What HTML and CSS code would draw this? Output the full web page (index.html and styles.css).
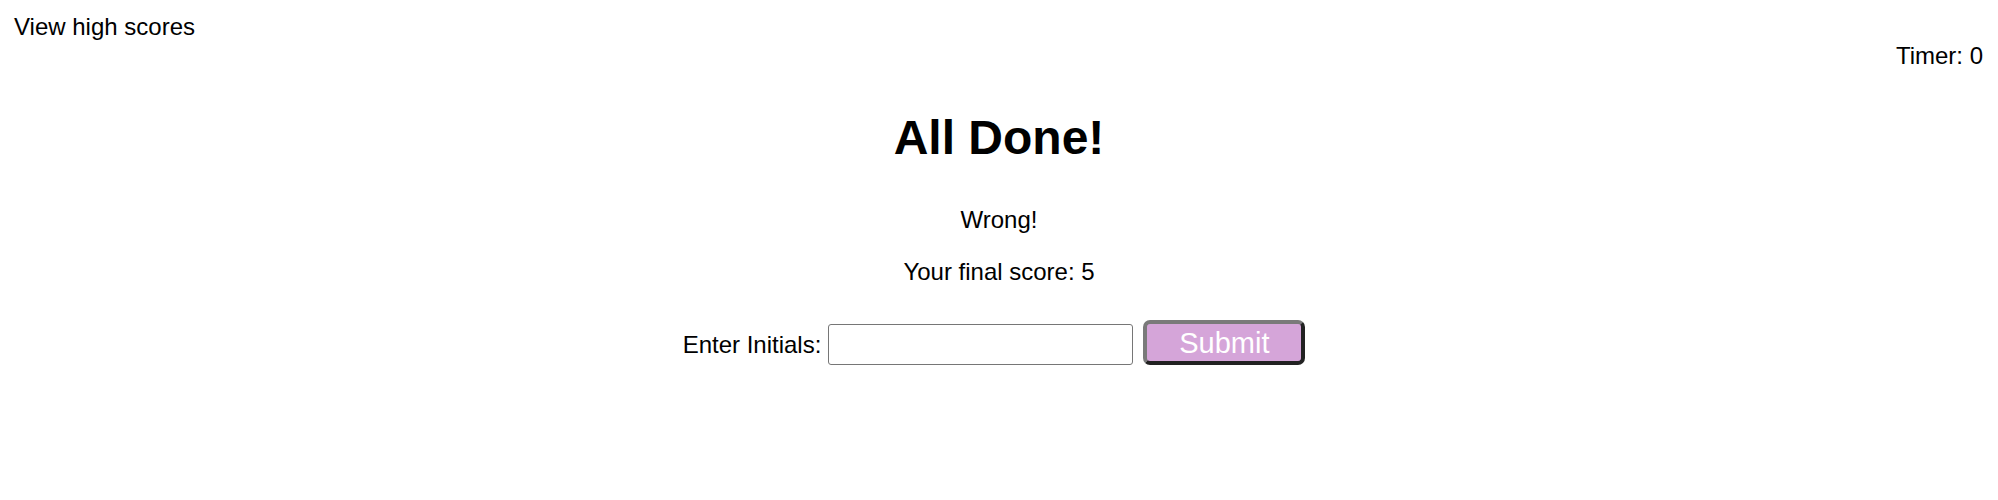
FILE: index.html
```html
<!DOCTYPE html>
<html lang="en">
<head>
<meta charset="utf-8">
<title>Quiz - All Done</title>
<link rel="stylesheet" href="styles.css">
</head>
<body>
<header class="top">
  <a class="scores-link">View high scores</a>
  <div class="timer">Timer: 0</div>
</header>
<main class="done">
  <h1 class="title">All Done!</h1>
  <p class="feedback">Wrong!</p>
  <p class="score">Your final score: 5</p>
  <form class="initials-form">
    <label class="initials-label" for="initials">Enter Initials:</label>
    <input class="initials-input" id="initials" type="text">
    <button class="submit-btn" type="button">Submit</button>
  </form>
</main>
</body>
</html>
```
FILE: styles.css
```css
html, body {
  margin: 0;
  padding: 0;
  background: #ffffff;
}
body {
  font-family: "Liberation Sans", Arial, Helvetica, sans-serif;
  font-size: 24px;
  line-height: 28px;
  color: #000000;
}
.top {
  padding: 13px 15px 0 14px;
}
.scores-link {
  display: block;
  color: #000000;
  text-decoration: none;
}
.timer {
  margin-top: 1px;
  text-align: right;
}
.done {
  text-align: center;
}
.title {
  margin: 40px 0 0;
  font-size: 48px;
  line-height: 56px;
  font-weight: bold;
}
.feedback {
  margin: 40px 0 0;
}
.score {
  margin: 24px 0 0;
}
.initials-form {
  margin: 34px 0 0;
  display: flex;
  justify-content: center;
  align-items: flex-end;
  padding-right: 10px;
}
.initials-label {
  margin-bottom: 6px;
  margin-right: 7px;
}
.initials-input {
  box-sizing: border-box;
  width: 305px;
  height: 41px;
  margin: 0 10px 0 0;
  padding: 0 6px;
  border: 1px solid #767676;
  border-radius: 3px;
  font-family: "Liberation Sans", Arial, sans-serif;
  font-size: 24px;
  background: #ffffff;
}
.submit-btn {
  box-sizing: border-box;
  width: 162px;
  height: 45px;
  padding: 2px 0 0;
  border: 4px solid;
  border-color: #7a7a7a #222222 #222222 #7a7a7a;
  border-radius: 7px;
  background: #d5a5d9;
  color: #ffffff;
  font-family: "Liberation Sans", Arial, sans-serif;
  font-size: 29px;
  line-height: 33px;
}
```
